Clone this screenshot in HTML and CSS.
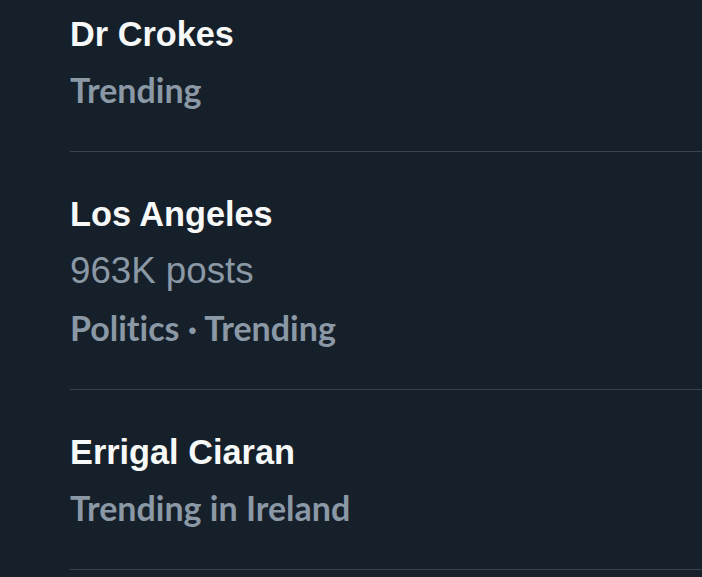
FILE: index.html
```html
<!DOCTYPE html>
<html lang="en">
<head>
<meta charset="utf-8">
<title>Trends</title>
<link rel="stylesheet" href="styles.css">
</head>
<body>
<div class="trends">
  <div class="trend">
    <div class="title">Dr Crokes</div>
    <div class="meta">Trending</div>
  </div>
  <div class="trend">
    <div class="title">Los Angeles</div>
    <div class="count">963K posts</div>
    <div class="meta">Politics · Trending</div>
  </div>
  <div class="trend">
    <div class="title">Errigal Ciaran</div>
    <div class="meta">Trending in Ireland</div>
  </div>
</div>
</body>
</html>
```

FILE: styles.css
```css
html, body {
  margin: 0;
  padding: 0;
  background: #16202a;
  height: 100%;
  overflow: hidden;
}
body {
  font-family: "Liberation Sans", Arial, sans-serif;
  color: #ffffff;
}
.trends {
  margin-top: -28px;
  padding-left: 70px;
}
.trend {
  display: flex;
  flex-direction: column;
  padding: 34px 0 33px;
  border-bottom: 1px solid #38444d;
}
.title {
  font-family: "Liberation Sans", Arial, sans-serif;
  font-size: 34.3px;
  line-height: 56px;
  font-weight: 700;
  color: #f7f9f9;
}
.meta {
  font-family: Lato, "Open Sans", sans-serif;
  font-size: 34px;
  line-height: 56px;
  font-weight: 700;
  color: #8b98a5;
  font-variant-ligatures: none;
}
.count {
  font-family: "Liberation Sans", Arial, sans-serif;
  font-size: 36.7px;
  line-height: 58px;
  font-weight: 400;
  color: #8b98a5;
}
```
